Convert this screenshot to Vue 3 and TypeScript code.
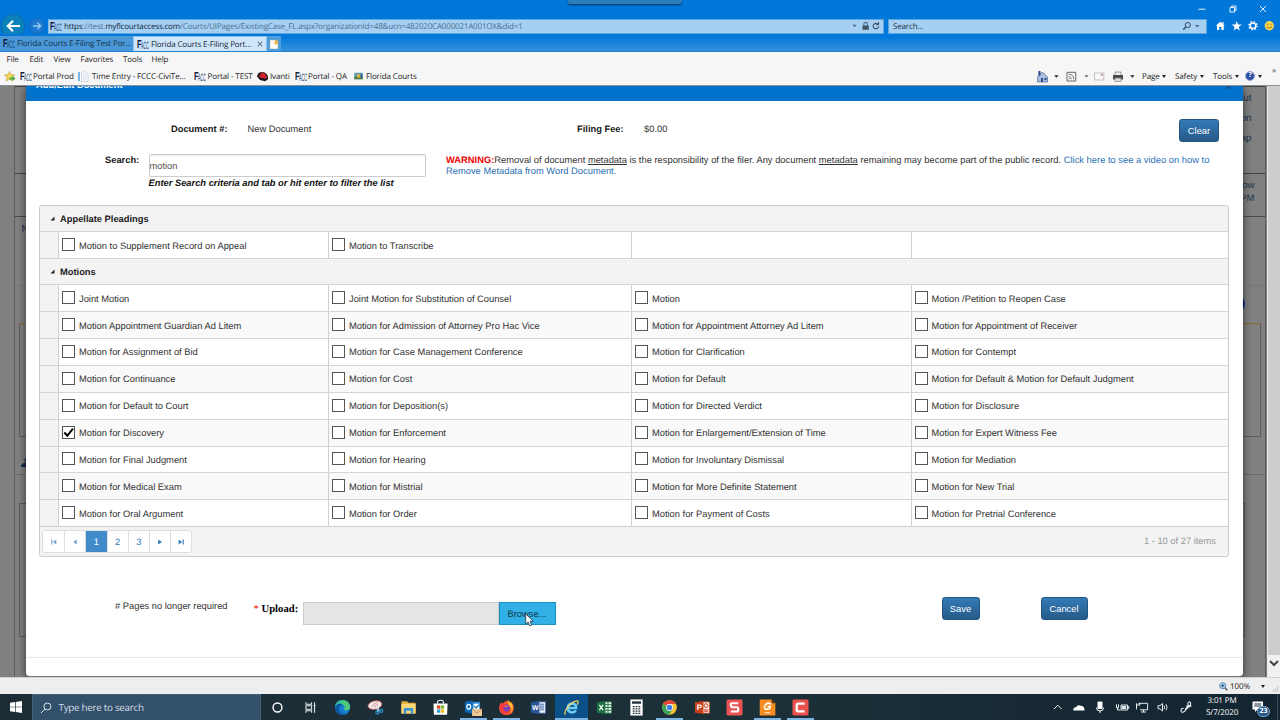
<script setup lang="ts">
interface Cell {
  label: string
  checked?: boolean
}
interface Group {
  title: string
  rows: Cell[][]
}

const toCells = (labels: string[]): Cell[] =>
  labels.map((label) => ({ label, checked: label === 'Motion for Discovery' }))

const groups: Group[] = [
  {
    title: 'Appellate Pleadings',
    rows: [toCells(['Motion to Supplement Record on Appeal', 'Motion to Transcribe', '', ''])],
  },
  {
    title: 'Motions',
    rows: [
      ['Joint Motion', 'Joint Motion for Substitution of Counsel', 'Motion', 'Motion /Petition to Reopen Case'],
      ['Motion Appointment Guardian Ad Litem', 'Motion for Admission of Attorney Pro Hac Vice', 'Motion for Appointment Attorney Ad Litem', 'Motion for Appointment of Receiver'],
      ['Motion for Assignment of Bid', 'Motion for Case Management Conference', 'Motion for Clarification', 'Motion for Contempt'],
      ['Motion for Continuance', 'Motion for Cost', 'Motion for Default', 'Motion for Default & Motion for Default Judgment'],
      ['Motion for Default to Court', 'Motion for Deposition(s)', 'Motion for Directed Verdict', 'Motion for Disclosure'],
      ['Motion for Discovery', 'Motion for Enforcement', 'Motion for Enlargement/Extension of Time', 'Motion for Expert Witness Fee'],
      ['Motion for Final Judgment', 'Motion for Hearing', 'Motion for Involuntary Dismissal', 'Motion for Mediation'],
      ['Motion for Medical Exam', 'Motion for Mistrial', 'Motion for More Definite Statement', 'Motion for New Trial'],
      ['Motion for Oral Argument', 'Motion for Order', 'Motion for Payment of Costs', 'Motion for Pretrial Conference'],
    ].map(toCells),
  },
]

const menus = ['File', 'Edit', 'View', 'Favorites', 'Tools', 'Help']
</script>

<template>
  <div class="screen">
    <svg class="defs" width="0" height="0">
      <symbol id="facc" viewBox="0 0 12 11">
        <text x="0" y="8.6" font-size="11.5" font-weight="700" fill="#101c3c" textLength="4.6" lengthAdjust="spacingAndGlyphs">F</text>
        <text x="4" y="9.9" font-size="10.800" font-weight="400" fill="#173f70" textLength="7.9" lengthAdjust="spacingAndGlyphs">ACC</text>
      </symbol>
    </svg>

    <header class="chrome">
      <div class="dock-tab"></div>
      <div class="window-buttons">
        <svg viewBox="0 0 8 8"><path d="M.5 4.2h7" /></svg>
        <svg viewBox="0 0 8 8"><path d="M1 2.5h4.5V7H1zM2.6 2.3V1H7v4.6H5.8" /></svg>
        <svg viewBox="0 0 8 8"><path d="M1 1l6 6M7 1L1 7" /></svg>
      </div>

      <div class="address-row">
        <svg class="nav-back" viewBox="0 0 24 24">
          <circle cx="12" cy="12" r="11.6" fill="#0c82bd" stroke="#1766a6" stroke-width=".8" />
          <path d="M19 12H7M12 6.8L6.8 12l5.200 5.200" fill="none" stroke="#fff" stroke-width="2.200" />
        </svg>
        <svg class="nav-forward" viewBox="0 0 16 16">
          <circle cx="8" cy="8" r="7.400" fill="#1b79cf" stroke="#1765b1" stroke-width=".8" />
          <path d="M4 8h7.500M8.300 4.600L11.700 8l-3.400 3.400" fill="none" stroke="#9dcbf3" stroke-width="1.300" />
        </svg>
        <div class="url-box">
          <svg class="facc"><use href="#facc" /></svg>
          <span class="url"><b>https</b>://test.<b>myflcourtaccess.com</b><span class="url-path">/Courts/UIPages/ExistingCase_FL.aspx?organizationId=48&amp;ucn=482020CA000021A001OX&amp;did=1</span></span>
          <svg class="url-tools" viewBox="0 0 28 10">
            <path d="M.5 3.800h4.200L2.600 6.300z" fill="#4c6a86" />
            <path d="M10.500 4.500h6.300v4.300h-6.300z" fill="#3e5061" />
            <path d="M11.800 4.500V3.200a1.850 1.850 0 0 1 3.700 0v1.300" fill="none" stroke="#3e5061" />
            <path d="M26.600 5.300a2.700 2.700 0 1 1-1-2.300M26.500 1v2.500H24" fill="none" stroke="#3e5061" stroke-width="1.100" />
          </svg>
        </div>
        <div class="search-box">
          <span>Search...</span>
          <svg viewBox="0 0 20 10">
            <circle cx="5.800" cy="4" r="2.600" fill="none" stroke="#334a62" />
            <path d="M3.800 6L1.200 8.700" stroke="#334a62" stroke-width="1.300" />
            <path d="M13 4h4.400l-2.200 2.400z" fill="#4c6a86" />
          </svg>
        </div>
        <svg class="chrome-tools" viewBox="0 0 60 12">
          <path d="M.8 5.800L5.300 1.800l1.900 1.700V2h1.300v2.600l1.300 1.200H8.700V10H6.400V7H4.300v3H2V5.800z" fill="#fff" />
          <path d="M21.700 1l1.300 3.400 3.700.2-2.900 2.300 1 3.600-3.100-2-3.100 2 1-3.600-2.900-2.300 3.700-.2z" fill="#fff" />
          <circle cx="38" cy="5.700" r="2.800" fill="none" stroke="#fff" stroke-width="1.500" />
          <circle cx="38" cy="5.700" r="4.100" fill="none" stroke="#fff" stroke-width="1.300" stroke-dasharray="1.600 1.620" />
          <circle cx="54.300" cy="5.700" r="4.700" fill="#f8d44c" />
          <path d="M52.700 3.600v1.500M55.900 3.600v1.500M51.600 6.800q2.700 2.600 5.400 0" fill="none" stroke="#7a5a12" stroke-width=".8" />
        </svg>
      </div>

      <div class="tab-row">
        <div class="tab"><svg class="facc"><use href="#facc" /></svg><span>Florida Courts E-Filing Test Por...</span></div>
        <div class="tab tab-active">
          <svg class="facc"><use href="#facc" /></svg><span>Florida Courts E-Filing Port...</span>
          <svg class="tab-close" viewBox="0 0 6 6"><path d="M.7.7l4.600 4.600M5.300.7L.7 5.300" stroke="#6b7c8e" stroke-width="1.100" /></svg>
        </div>
        <div class="tab-new">
          <svg viewBox="0 0 10 10"><path d="M1 1h5.500L9 3.500V10H1z" fill="#fffdf6" stroke="#a59c85" stroke-width=".5" /><path d="M6.800 0l1 1.700 2 .4-1.300 1.600.2 2-1.900-.8-1.500.8.200-2z" fill="#eeb23e" /></svg>
        </div>
      </div>
    </header>

    <div class="bars">
      <nav class="menu-bar"><span v-for="m in menus" :key="m" :class="'menu-' + m.toLowerCase()">{{ m }}</span></nav>
      <div class="favorites-bar">
        <svg class="fav-star" viewBox="0 0 12 11">
          <path d="M5.500.5l1.500 3.200 3.600.3-2.700 2.400.9 3.600-3.300-1.900-3.200 1.900.9-3.600L.5 4l3.600-.3z" fill="#f6d95a" stroke="#b98f20" stroke-width=".6" />
          <path d="M5.500 6.500h3V4.800L11.500 7.500 8.500 10V8.500h-3z" fill="#49a942" />
        </svg>
        <a class="fav fav-prod"><svg class="facc"><use href="#facc" /></svg><span>Portal Prod</span></a>
        <a class="fav fav-time">
          <svg class="fav-page" viewBox="0 0 11 11"><path d="M1 1v9" stroke="#3c93cf" stroke-width="1.300" /><path d="M3.500 1h4.500l2 2v7.500H3.500z" fill="#f7fafd" stroke="#b8c3ce" stroke-width=".6" /><path d="M4.800 4h3.500M4.800 6h3.500M4.800 8h3.500" stroke="#b6cbe0" stroke-width=".6" /></svg>
          <span>Time Entry - FCCC-CiviTe...</span>
        </a>
        <a class="fav fav-test"><svg class="facc"><use href="#facc" /></svg><span>Portal - TEST</span></a>
        <a class="fav fav-ivanti">
          <svg class="fav-hat" viewBox="0 0 11 11"><path d="M0 5.500Q1 1 4 1.200 8 .3 10 3.500q1.500 2 .8 5L8 10.200 3 9z" fill="#1c1414" /><path d="M.5 5.200Q2 6.300 3 4.500 3.600 1.200 5.300 1.800q3.600.3 3.600 2.900Q11 6 9.800 7.200 6.500 8.300.5 5.200z" fill="#cf2430" /></svg>
          <span>Ivanti</span>
        </a>
        <a class="fav fav-qa"><svg class="facc"><use href="#facc" /></svg><span>Portal - QA</span></a>
        <a class="fav fav-courts">
          <svg class="fav-pic" viewBox="0 0 9 8"><path d="M.3.800h8.400v6.400H.3z" fill="#5c9fb5" /><path d="M.3 4.800l8.400-.8v3.200H.3z" fill="#507a3f" /><path d="M3 2.400h3.400v3.200H3z" fill="#e6b13d" /><path d="M6.600 1.500h1.700v4H6.600z" fill="#3566a5" /></svg>
          <span>Florida Courts</span>
        </a>
        <div class="command-bar">
          <svg class="cmd-icons" viewBox="0 0 104 13">
            <path d="M1.500 7L6.500 2l5 5v5h-10z" fill="#a9bfdd" stroke="#4d6391" stroke-width=".7" /><path d="M2.500 1h2v4l-2 1.500z" fill="#25418f" /><path d="M5 8h2v4H5zM8.500 8h2v2h-2z" fill="#2d4f8d" />
            <path d="M18.200 5.200h4.300l-2.150 2.500z" fill="#222" />
            <path d="M31 2.300h8.700v8.700H31z" fill="#fafafa" stroke="#666" /><path d="M32.700 8.900h1.100M32.700 6.500q2.600.1 2.600 2.700M32.700 4.200q5 .2 5 5" fill="none" stroke="#666" stroke-width=".9" />
            <path d="M48.400 5.200h4l-2 2.300z" fill="#666" />
            <path d="M58.500 3h9.300v7h-9.300z" fill="#fafafa" stroke="#b4b4b4" stroke-width=".8" /><path d="M64.700 4h2v1.800h-2z" fill="#c98b8b" />
            <path d="M79 2h6v4h-6z" fill="#eee" stroke="#777" stroke-width=".7" /><path d="M77 5h10v4.500H77z" fill="#4a4a4a" /><path d="M79 8h6v3.500h-6z" fill="#ddd" stroke="#777" stroke-width=".6" />
            <path d="M94.200 5.200h4.300l-2.150 2.500z" fill="#222" />
          </svg>
          <span class="cmd cmd-page">Page<i></i></span>
          <span class="cmd cmd-safety">Safety<i></i></span>
          <span class="cmd cmd-tools">Tools<i></i></span>
          <span class="cmd cmd-help"><b>?</b><i></i></span>
          <span class="more">»</span>
        </div>
      </div>
    </div>

    <main class="viewport">
      <div class="site">
        <div class="site-head"><span>out</span><span>on</span><span>ap</span></div>
        <div class="site-band"><span>low</span><span>PM</span></div>
        <div class="site-section site-first">
          <div class="site-title"><span>N</span></div>
          <div class="site-sub"><span>)</span></div>
          <div class="site-box"></div>
          <svg class="site-person" viewBox="0 0 10 12"><circle cx="6" cy="3" r="2.500" fill="#24344e" /><path d="M0 10q0-4 6-5l4 5z" fill="#14274f" /></svg>
        </div>
        <div class="site-section site-second"><div class="site-inner"></div></div>
      </div>

      <div class="scrollbar">
        <svg viewBox="0 0 12 16"><path d="M2 6l4 4 4-4" fill="none" stroke="#444" stroke-width="2" /></svg>
      </div>

      <section class="dialog">
        <div class="dialog-head"><strong>Add/Edit Document</strong><span>×</span></div>
        <div class="dialog-body">
          <div class="doc-row">
            <b class="doc-label">Document #:</b><span class="doc-value">New Document</span>
            <b class="fee-label">Filing Fee:</b><span class="fee-value">$0.00</span>
            <button class="btn btn-clear">Clear</button>
          </div>

          <div class="search-row">
            <b class="search-label">Search:</b>
            <div class="search-field">
              <div class="input">motion</div>
              <em>Enter Search criteria and tab or hit enter to filter the list</em>
            </div>
            <p class="warning">
              <b>WARNING:</b>Removal of document <u>metadata</u> is the responsibility of the filer. Any document <u>metadata</u> remaining may become part of the public record. <a>Click here to see a video on how to<br />Remove Metadata from Word Document.</a>
            </p>
          </div>

          <div class="grid">
            <template v-for="g in groups" :key="g.title">
              <div class="group-head"><svg viewBox="0 0 5 5"><path d="M4.500.5v4h-4z" fill="#222" /></svg>{{ g.title }}</div>
              <div v-for="(row, r) in g.rows" :key="r" class="grid-row" :class="{ alt: r % 2 === 1 }">
                <div class="indent"></div>
                <div v-for="(cell, c) in row" :key="c" class="cell">
                  <template v-if="cell.label">
                    <span class="check"><svg v-if="cell.checked" viewBox="0 0 11 11"><path d="M1.300 5.500L4.300 8.700 10 1.700" fill="none" stroke="#000" stroke-width="1.900" /></svg></span>
                    <span class="cell-label">{{ cell.label }}</span>
                  </template>
                </div>
              </div>
            </template>
            <div class="pager">
              <div class="pages">
                <span><svg class="dim" viewBox="0 0 6 6"><path d="M.8.6v4.800" stroke="#4a8bc6" stroke-width="1.100" /><path d="M5.400.6v4.800L1.800 3z" fill="#4a8bc6" /></svg></span>
                <span><svg class="dim" viewBox="0 0 6 6"><path d="M4.800.6v4.800L1.200 3z" fill="#4a8bc6" /></svg></span>
                <span class="current">1</span>
                <span>2</span>
                <span>3</span>
                <span><svg viewBox="0 0 6 6"><path d="M1.200.6v4.800L5 3z" fill="#337ab7" /></svg></span>
                <span><svg viewBox="0 0 6 6"><path d="M5.200.6v4.800" stroke="#337ab7" stroke-width="1.100" /><path d="M.6.6v4.800L4.200 3z" fill="#337ab7" /></svg></span>
              </div>
              <span class="pager-info">1 - 10 of 27 items</span>
            </div>
          </div>

          <div class="upload-row">
            <span class="pages-note"># Pages no longer required</span>
            <b class="upload-label"><i>*</i> Upload:</b>
            <div class="file-field"></div>
            <div class="browse">
              Browse...
              <svg class="cursor" viewBox="0 0 9 14"><path d="M.7.800v10.400l2.400-2.200 1.700 3.900 1.900-.8L5 8.300h3.300z" fill="#fff" stroke="#26323c" stroke-width=".8" /></svg>
            </div>
            <button class="btn btn-save">Save</button>
            <button class="btn btn-cancel">Cancel</button>
          </div>
        </div>
      </section>
    </main>

    <div class="status-bar">
      <svg class="zoom-icon" viewBox="0 0 9 9"><circle cx="3.700" cy="3.700" r="3" fill="#b8d9f2" stroke="#4d7ba8" stroke-width=".9" /><path d="M2.200 3.700h3M3.700 2.200v3" stroke="#1f4d86" /><path d="M6 6l2.300 2.300" stroke="#555" stroke-width="1.500" /></svg>
      <span>100%</span><i></i>
      <svg class="grip" viewBox="0 0 7 7"><path d="M5 1h1.200M3 3h1.200M5 3h1.200M1 5h1.200M3 5h1.200M5 5h1.200" stroke="#aaa" stroke-width="1.200" /></svg>
    </div>

    <footer class="taskbar">
      <div class="start"><svg viewBox="0 0 12 12"><path d="M0 1.700l5-.7v4.700H0zM5.700.9L12 0v5.700H5.700zM0 6.300h5V11l-5-.7zM5.700 6.300H12V12l-6.300-.9z" fill="#fff" /></svg></div>
      <div class="task-search">
        <svg viewBox="0 0 12 12"><circle cx="7.400" cy="4.500" r="3.500" fill="none" stroke="#dbe4ea" stroke-width="1" /><path d="M4.900 7.100L1 11" stroke="#dbe4ea" stroke-width="1" /></svg>
        <span>Type here to search</span>
      </div>
      <div class="task"><svg viewBox="0 0 18 18"><circle cx="9" cy="9" r="4.700" fill="none" stroke="#fff" stroke-width="1.500" /></svg></div>
      <div class="task"><svg viewBox="0 0 18 18"><path d="M4.200 3.500v2h6v-2M4.200 14.500v-2h6v2M4.200 7.200h6v3.600h-6zM13.300 3.500v11M12.300 6.800h2" fill="none" stroke="#e8eef0" stroke-width="1.100" /></svg></div>
      <div class="task">
        <svg viewBox="0 0 18 18">
          <circle cx="9" cy="9" r="8" fill="#1583d4" />
          <path d="M1.200 8Q2 1 9.300 1q7 .3 7.700 7 .1 4-4 4-3-.2-2-1.700 1.500-3-1.500-4.300Q4 4.500 1.200 8z" fill="#38bd9c" />
          <path d="M7 2Q15 0 17 8q0 4-4 4-3-.2-2-1.700 1.500-3-1.500-4.300z" fill="#5bd06b" opacity=".65" />
          <path d="M9.200 6Q4.800 7 5.800 12q1 4 6.500 4Q4 19 1.400 11 .5 6.500 5 5q3-.4 4.200 1z" fill="#0c58a5" />
          <path d="M9.200 7.500q-2 3 .3 5 3 2 6.300.8L14 16q-6 0-7-5 0-3 2.200-3.500z" fill="#1a79c3" />
        </svg>
      </div>
      <div class="task"><svg viewBox="0 0 18 18"><ellipse cx="8.300" cy="6.500" rx="7.500" ry="4.500" fill="#f0e9e9" stroke="#b84444" stroke-width=".8" transform="rotate(-12 8 6)" /><path d="M5 8l6-5M8 8l4-3" stroke="#c76d6d" stroke-width=".8" /><path d="M8 8.500l6 5M12.500 8l-1.500 6" stroke="#c8d3d9" stroke-width="1.200" /><circle cx="11" cy="14.500" r="1.600" fill="none" stroke="#2693d1" stroke-width="1.300" /><circle cx="15" cy="12.700" r="1.600" fill="none" stroke="#2693d1" stroke-width="1.300" /></svg></div>
      <div class="task"><svg viewBox="0 0 18 18"><path d="M1.500 2.500h6l1.500 1.500h7.500V15h-15z" fill="#e6ab34" /><path d="M1.500 5h15V15.500h-15z" fill="#fcd877" /><path d="M4 15.500V9.500h10v6h-2.500v-3h-5v3z" fill="#3c94d4" /></svg></div>
      <div class="task"><svg viewBox="0 0 18 18"><path d="M6 5V3.300Q6 1.300 9 1.300t3 2V5" fill="none" stroke="#fff" stroke-width="1.100" /><path d="M1.500 4.700h15L16 16.800H2z" fill="#fff" /><path d="M5.200 6.800h3.500v3.500H5.200z" fill="#e74b26" /><path d="M9.300 6.800h3.500v3.500H9.300z" fill="#76b82a" /><path d="M5.200 11h3.500v3.500H5.200z" fill="#2a9ddd" /><path d="M9.300 11h3.500v3.500H9.300z" fill="#f6b61c" /></svg></div>
      <div class="task open stacked"><svg viewBox="0 0 18 18"><path d="M7 3h9v10H7z" fill="#2a8ad4" /><path d="M9 5h6v6H9z" fill="#fff" /><path d="M9.800 7.500l2 2L15 6" fill="none" stroke="#1b76bd" stroke-width="1.400" /><path d="M0 3l8-1.500v14L0 14z" fill="#0a68b8" /><ellipse cx="4" cy="8.300" rx="2" ry="2.500" fill="none" stroke="#fff" stroke-width="1.300" /><path d="M7.500 10.500H18V18H7.500z" fill="#f0cb99" /><path d="M7.500 10.500l5.200 4.500L18 10.500" fill="none" stroke="#ae7f47" stroke-width=".8" /></svg></div>
      <div class="task open">
        <svg viewBox="0 0 18 18">
          <path d="M9 1.500Q11 4 13 4.500l1-1.500q3 3 2.800 7-.5 7-7.800 7T1.200 10Q1 6 3.500 3.500L4.500 5q2.500-2 4.500-3.500z" fill="#f5522e" />
          <path d="M10 1q4 2 5.500 6 1 6-3 8.500Q16 10 12.500 8q-2-2-2.500-7z" fill="#ffbd2e" />
          <circle cx="8.700" cy="9.700" r="3.900" fill="#7a43b8" /><path d="M2 6q3-2 6.500.5Q6 8 5.500 10q1 4 6 3.500Q8 17 4 14 .8 10 2 6z" fill="#f9393f" /><path d="M6 8.500q3-2 5 0z" fill="#ff9838" />
        </svg>
      </div>
      <div class="task"><svg viewBox="0 0 18 18"><path d="M9 3h7.500v12H9z" fill="#f2f6fb" stroke="#3261aa" stroke-width=".8" /><path d="M10.500 5.500h4.500M10.500 7.500h4.500M10.500 9.500h4.500M10.500 11.500h4.500" stroke="#3261aa" /><path d="M1 3.500L10 2v14L1 14.500z" fill="#2b579a" /><text x="2" y="11.600" font-size="7.500" font-weight="700" fill="#fff" textLength="7" lengthAdjust="spacingAndGlyphs">W</text></svg></div>
      <div class="task open active"><svg viewBox="0 0 18 18"><path d="M4.500 9.500h9.300Q14 4.800 9.700 4.700 5 5 4.900 10q.3 4.200 4.800 4.200 2.600 0 4-2.200" fill="none" stroke="#67cdf5" stroke-width="2.700" /><path d="M2.500 16.500Q.5 14 5 8.500 12 1 15.500 2q1.300 1-.5 4" fill="none" stroke="#ffd45a" stroke-width="1.300" /></svg></div>
      <div class="task"><svg viewBox="0 0 18 18"><path d="M9 3h7.500v12H9z" fill="#e9f4ec" stroke="#217346" stroke-width=".8" /><path d="M12.700 3v12M9 6h7.500M9 9h7.500M9 12h7.500" stroke="#217346" /><path d="M1 3.500L10 2v14L1 14.500z" fill="#1e7144" /><path d="M3.500 6.200l4 5.600M7.500 6.200l-4 5.600" stroke="#fff" stroke-width="1.300" /></svg></div>
      <div class="task"><svg viewBox="0 0 18 18"><path d="M2.500.5h13v17h-13z" fill="#fff" /><path d="M4.200 2.500h9.600v2.500H4.200z" fill="#1d2d38" /><path d="M5 8h2M8 8h2M11 8h2M5 10.500h2M8 10.500h2M11 10.500h2M5 12.800h2M8 12.800h2M11 12.800h2M5 15.200h2M8 15.200h2M11 15.200h2" stroke="#1d2d38" stroke-width="1.300" /></svg></div>
      <div class="task open"><svg viewBox="0 0 18 18"><circle cx="9" cy="9" r="7.800" fill="#f2c32f" /><path d="M9 9L2.200 5.200A7.800 7.800 0 0 1 15.800 5.200H9z" fill="#e2483c" /><path d="M9 9L2.200 5.200A7.800 7.800 0 0 0 8.600 16.800L12 11z" fill="#3ba655" /><circle cx="9" cy="9" r="3.700" fill="#fff" /><circle cx="9" cy="9" r="2.900" fill="#447fe8" /></svg></div>
      <div class="task"><svg viewBox="0 0 18 18"><path d="M9 3h7.500v12H9z" fill="#fbeae5" stroke="#c43e1c" stroke-width=".8" /><circle cx="12.700" cy="7" r="2" fill="none" stroke="#c43e1c" /><path d="M10.500 11.500h4.700M10.500 13h4.700" stroke="#c43e1c" /><path d="M1 3.500L10 2v14L1 14.500z" fill="#c9401f" /><text x="2.800" y="11.800" font-size="8.500" font-weight="700" fill="#fff">P</text></svg></div>
      <div class="task"><svg viewBox="0 0 18 18"><rect x=".5" y=".5" width="17" height="17" rx="1.500" fill="#e95452" /><path d="M13 4.500H6.500Q5 4.500 5 6.300T6.500 8.800h5q1.500 0 1.500 2.200t-1.500 2.300H5" fill="none" stroke="#fff" stroke-width="2.200" /></svg></div>
      <div class="task open"><svg viewBox="0 0 18 18"><path d="M.8.5h12.500l4 4v13H.8z" fill="#f58d20" /><path d="M13.300.5l4 4h-4z" fill="#5d3410" /><path d="M13 5.500Q9 3 6.500 6.500T8.500 11q3.500-.2 3.500-3H9" fill="none" stroke="#fff" stroke-width="1.700" /><path d="M6 14.500h6" stroke="#fbd4a8" stroke-width="1.500" /></svg></div>
      <div class="task open"><svg viewBox="0 0 18 18"><rect x=".5" y=".5" width="17" height="17" rx="1.500" fill="#ea5250" /><path d="M13.300 4.800H6.500Q5 4.800 5 6.500v5Q5 13.200 6.500 13.200h6.800" fill="none" stroke="#fff" stroke-width="2.400" /></svg></div>

      <svg class="tray" viewBox="0 0 146 26">
        <g fill="none" stroke="#e6ecef" stroke-width="1">
          <path d="M3 15l3.800-3.800L10.600 15" />
          <path d="M65.500 10.300v3.500h2v-3.500M66.500 13.800v2.200h3M70 11h6.500v5H70zM76.500 12.500h1.300v2h-1.300" />
          <path d="M85.500 9.300v6M87.300 9.300h9.300v6.500H89M92.500 16v2M90 18h5M85.500 11h3.500v-2" />
          <path d="M107 11.700h2l2.500-2.200v7.500l-2.500-2.200h-2zM113 11.500q1.300 1.700 0 3.500M115 10.300q2.200 2.900 0 5.900" />
          <path d="M132.500 14.500q-2.500-.5-2.500 2t2.500 1.500 2-3l3-3.500q-1.500-2.800.5-3.500t1.500 3l-4.500 4.500M135 12h5.500M135.500 14l4.500-2" stroke-width="1.100" />
        </g>
        <path d="M22.500 16.500q-1-3 2.500-3.200 1.500-3.300 5-1.500 3.500.3 3.500 4.700z" fill="#fff" />
        <path d="M70.500 12h4.700v3h-4.700z" fill="#dfe6e9" />
        <rect x="46.500" y="7.500" width="5" height="7.500" rx="1" fill="#fff" /><path d="M45.500 13.500q0 3.500 3.500 3.500t3.500-3.500M49 17v2" stroke="#fff" fill="none" />
      </svg>
      <div class="clock"><span>3:01 PM</span><span>5/7/2020</span></div>
      <div class="notify">
        <svg viewBox="0 0 12 12"><path d="M.5.5h10.500v8H5.500L3 11V8.500H.5z" fill="#fff" /><path d="M2.300 3h7M2.300 5h7" stroke="#1a2c38" /></svg>
        <b>23</b>
      </div>
    </footer>
  </div>
</template>

<style>
html, body { background: #f5f5f6; overflow: hidden; }
</style>

<style scoped>
* { box-sizing: border-box; }
.screen { width: 1280px; height: 720px; display: flex; flex-direction: column; overflow: hidden; font-family: "Open Sans", "Noto Sans", sans-serif; font-size: 8px; color: #222; text-rendering: geometricPrecision; white-space: nowrap; }
.defs { position: absolute; }
svg { flex: none; display: block; }
.facc { width: 12px; height: 11px; font-family: "Liberation Sans", sans-serif; letter-spacing: 0; }

/* Browser frame */
.chrome { height: 52px; flex: none; background: #0177da; position: relative; display: flex; flex-direction: column; }
.dock-tab { position: absolute; left: 568px; top: 0; width: 114px; height: 4px; background: #2d7dbb; border-radius: 0 0 2px 2px; box-shadow: 0 1px 2px #06335e; }
.window-buttons { height: 18px; display: flex; justify-content: flex-end; align-items: center; gap: 22.500px; padding-right: 13px; }
.window-buttons svg { width: 8px; height: 8px; fill: none; stroke: #e4f2ff; stroke-width: 1; }
.address-row { height: 16px; display: flex; align-items: center; }
.nav-back { width: 24px; height: 24px; margin-left: 1px; }
.nav-forward { width: 16px; height: 16px; margin-left: 4px; }
.url-box { margin-left: 3px; width: 836px; height: 15px; background: #a5d0f4; border: 1px solid #5fa6e0; border-left-color: #86b9e3; display: flex; align-items: center; padding-left: 1px; }
.url { margin-left: 2px; color: #4e6f8d; font-size: 8px; letter-spacing: -.175px; }
.url b { font-weight: 400; color: #0e2439; }
.url-tools { width: 28px; height: 10px; margin-left: auto; margin-right: 3px; }
.search-box { margin-left: 4px; width: 319px; height: 15px; background: #a5d0f4; border: 1px solid #5fa6e0; display: flex; align-items: center; justify-content: space-between; padding: 0 4px; color: #1d2f40; letter-spacing: -.15px; }
.search-box svg { width: 20px; height: 10px; }
.chrome-tools { width: 60px; height: 12px; margin-left: 8px; }
.tab-row { height: 18px; padding-top: 2px; display: flex; background: linear-gradient(#0177da 15%, #3490dc); border-bottom: 1px solid #2180cf; }
.tab { width: 133px; display: flex; align-items: center; padding-left: 3px; background: #4a98d7; color: #13314c; font-size: 8px; letter-spacing: -.16px; }
.tab span { margin-left: 2px; }
.tab-active { width: 134px; background: #cfe6fa; border: 1px solid #8cc2ee; border-bottom: 0; color: #1a2733; }
.tab-close { width: 6px; height: 6px; margin-left: auto; margin-right: 3px; }
.tab-new { width: 14px; background: #4d9ede; display: flex; align-items: center; justify-content: center; }
.tab-new svg { width: 10px; height: 10px; }

.bars { height: 34px; flex: none; background: #f6f6f7; border-bottom: 1px solid #8a9199; letter-spacing: -.12px; }
.menu-bar { height: 15px; display: flex; align-items: center; font-size: 8px; color: #1d1d1d; padding-left: 6.500px; }
.menu-file { width: 23px; }
.menu-edit { width: 24px; }
.menu-view { width: 27px; }
.menu-favorites { width: 42.500px; }
.menu-tools { width: 28.500px; }
.favorites-bar { height: 18px; display: flex; align-items: center; font-size: 8px; }
.fav-star { width: 12px; height: 11px; margin-left: 3.500px; }
.fav { display: flex; align-items: center; }
.fav-prod { margin-left: 4px; width: 58.500px; }
.fav-prod span, .fav-test span, .fav-qa span { margin-left: 1.500px; }
.fav-time { width: 116px; }
.fav-page, .fav-hat { width: 11px; height: 11px; }
.fav-time span { margin-left: 3px; }
.fav-test { width: 63px; }
.fav-ivanti { width: 37.500px; }
.fav-ivanti span { margin-left: 2px; }
.fav-qa { width: 59.500px; }
.fav-pic { width: 9px; height: 8px; }
.fav-courts span { margin-left: 3px; }
.command-bar { margin-left: auto; display: flex; align-items: center; }
.cmd-icons { width: 104px; height: 13px; }
.cmd { display: flex; align-items: center; }
.cmd i, .status-bar i { border: 2.200px solid transparent; border-top: 3px solid #222; border-bottom: 0; margin-left: 2.500px; }
.cmd-page { width: 33px; margin-left: 2px; }
.cmd-safety { width: 38px; }
.cmd-tools { width: 32px; }
.cmd-help { width: 27px; }
.cmd-help b { width: 10px; height: 10px; border-radius: 50%; background: #2f4fa5; border: 1px solid #98a9cb; color: #fff; font-size: 7px; line-height: 8px; text-align: center; }
.more { width: 8px; margin-top: -12px; color: #444; }

/* Page area */
.viewport { height: 591px; flex: none; position: relative; display: flex; background: #808080; overflow: hidden; font-family: "Liberation Sans", Arial, sans-serif; font-size: 9.333px; }
.site { width: 1253.500px; margin-left: 13.500px; display: flex; flex-direction: column; border: solid #5c5c5c; border-width: 0 1px; color: #20344e; }
.site-head { height: 88px; padding: 2px 13.500px 0 0; display: flex; flex-direction: column; align-items: flex-end; border-bottom: 1px solid #444; border-top: 1px solid #444; font-size: 10px; line-height: 20px; }
.site-band { height: 43px; padding: 5px 10.500px 0 0; display: flex; flex-direction: column; align-items: flex-end; border-bottom: 1px solid #4a4a4a; line-height: 13.300px; font-size: 9.600px; }
.site-first { height: 258px; border-bottom: 1px solid #6b6b6b; }
.site-title { height: 69px; padding: 7px 0 0 7px; border-bottom: 1px solid #777; color: #1b2450; font-size: 10px; }
.site-sub { height: 37px; text-align: right; padding: 9px 20px 0 0; color: #000080; font-weight: 700; font-size: 13px; }
.site-box { height: 114px; margin: 0 4px; border: 1px solid #5e5e5e; border-top-color: #8a6a33; }
.site-person { width: 10px; height: 12px; margin: 20px 0 0 6px; }
.site-second { flex: 1; padding-top: 28px; }
.site-inner { height: 134px; margin: 0 20px 0 4px; border: 1px solid #5e5e5e; }
.scrollbar { margin-left: 1px; flex: 1; background: #cdcdcd; border-left: 1px solid #e8e8e8; display: flex; flex-direction: column; justify-content: flex-end; padding-bottom: 6px; }
.scrollbar svg { width: 12px; height: 16px; background: #f1f1f1; box-shadow: 0 6px #f1f1f1; }

.dialog { position: absolute; left: 26px; top: 0; width: 1217px; height: 591px; background: #fff; border-radius: 0 0 4px 4px; border-bottom: 1px solid #777; box-shadow: 0 2px 9px rgba(0, 0, 0, .6); color: #333; }
.dialog-head { height: 15px; background: #0072cc; color: #fff; display: flex; justify-content: space-between; align-items: flex-start; padding: 0 10px; overflow: hidden; font-size: 9.333px; line-height: 12px; }
.dialog-head strong { margin-top: -7px; }
.dialog-head span { margin-top: -6px; color: #174f83; font-size: 14px; }
.dialog-body { height: 557px; border-bottom: 1px solid #e9e9e9; display: flex; flex-direction: column; }
.doc-row { height: 53px; padding-top: 18px; display: flex; align-items: flex-start; line-height: 20px; }
.doc-row b, .search-label { color: #1a1a1a; }
.doc-label { margin-left: 145px; width: 76.500px; }
.doc-value { width: 329.500px; }
.fee-label { width: 67px; }
.fee-value { width: 535px; }
.btn { height: 23px; border: 1px solid #245580; border-radius: 2.700px; background: linear-gradient(#337ab7, #265a88); color: #fff; font: 9.333px "Liberation Sans", Arial, sans-serif; padding: 0; text-align: center; }
.btn-clear { width: 40px; }
.search-row { height: 50px; display: flex; align-items: flex-start; }
.search-label { margin-left: 79px; width: 43.500px; line-height: 12px; }
.search-field { width: 297.500px; }
.input { width: 277.500px; height: 23px; border: 1px solid #ccc; border-radius: 2px; box-shadow: inset 0 1px 1px rgba(0, 0, 0, .08); line-height: 22px; color: #555; }
.search-field em { display: block; font-weight: 700; color: #111; line-height: 12px; }
.warning { margin: 1px 0 0; line-height: 10.667px; letter-spacing: .012px; }
.warning b { color: #e00; }
.warning a { color: #2a6fb3; }

/* Document type grid */
.grid { width: 1190px; margin-left: 13px; border: 1px solid #ccc; border-radius: 2.700px; margin-top: 1px; height: 352px; overflow: hidden; background: #f3f3f3; display: flex; flex-direction: column; }
.group-head { height: 25.300px; flex: none; display: flex; align-items: center; padding-left: 10px; font-weight: 700; color: #222; }
.group-head svg { width: 5px; height: 5px; margin-right: 5px; }
.grid-row { height: 26.860px; flex: none; display: grid; grid-template-columns: 18px 270px 303px 279.500px 1fr; background: #fff; border-top: 1px solid #d5d5d5; }
.grid-row.alt { background: #f9f9f9; }
.grid-row + .group-head { height: 26.200px; border-top: 1px solid #d5d5d5; }
.indent { background: #f3f3f3; }
.cell { border-left: 1px solid #d0d0d0; display: flex; align-items: center; padding-left: 3px; }
.check { width: 13px; height: 13px; border: 1px solid #555; background: #fff; margin-top: -1px; }
.check svg { width: 11px; height: 11px; }
.cell-label { margin: 1px 0 0 4px; }
.pager { flex: 1; border-top: 1px solid #ccc; display: flex; align-items: flex-start; justify-content: space-between; padding: 3px 12px 0 2px; }
.pages { display: flex; height: 23px; border: 1px solid #ddd; border-radius: 3px; overflow: hidden; background: #fff; }
.pages span { width: 21.200px; display: flex; align-items: center; justify-content: center; border-left: 1px solid #ddd; color: #337ab7; }
.pages span:first-child { border-left: 0; }
.pages .current { background: #428bca; color: #fff; }
.pages svg { width: 6px; height: 6px; }
.pages .dim { opacity: .75; }
.pager-info { color: #999; line-height: 22px; }

.upload-row { display: flex; align-items: flex-start; margin-top: 40px; line-height: 12px; }
.pages-note { margin: 3px 0 0 89px; width: 138.500px; }
.upload-label { font-family: "Liberation Serif", "Times New Roman", serif; font-size: 10.667px; color: #000; width: 49px; margin-top: 7px; }
.upload-label i { color: #e00; font-style: normal; font-weight: 400; }
.file-field { width: 196px; height: 23px; margin-top: 5px; background: #e5e5e5; border: 1px solid #ccc; }
.browse { position: relative; width: 57px; height: 23px; margin-top: 5px; background: #30b0e4; border: 1px solid #1b8fc4; line-height: 22px; padding-left: 8px; color: #12394b; }
.cursor { position: absolute; left: 25px; top: 10px; width: 9px; height: 14px; }
.btn-save { width: 38px; margin-left: 386px; }
.btn-cancel { width: 47px; margin-left: 61px; }

.status-bar { height: 17px; flex: none; background: #eee; border-top: 1px solid #d0d0d0; display: flex; align-items: center; justify-content: flex-end; font-size: 8px; letter-spacing: -.1px; }
.zoom-icon { width: 9px; height: 9px; margin-right: 2px; }
.status-bar i { margin-left: 11px; }
.grip { width: 7px; height: 7px; margin: 7px 1px 0 7px; }

/* Taskbar */
.taskbar { height: 26px; flex: none; background: linear-gradient(90deg, #1b2c35, #1c3038 60%, #132531); display: flex; align-items: stretch; color: #fff; }
.start { width: 32px; display: flex; align-items: center; justify-content: center; }
.start svg { width: 12px; height: 12px; }
.task-search { width: 229px; background: #33506a; border: solid #43627a; border-width: 1px 1px 0; display: flex; align-items: center; padding-left: 7px; font-size: 9.800px; letter-spacing: -.26px; color: #d5dee6; }
.task-search svg { width: 12px; height: 12px; margin-right: 6.500px; }
.task-search span { margin-top: -1px; }
.task { width: 32.700px; display: flex; align-items: center; justify-content: center; position: relative; font-family: "Liberation Sans", sans-serif; }
.task svg { width: 17px; height: 17px; }
.task.open::after { content: ""; position: absolute; left: 3px; right: 3px; bottom: 0; height: 2px; background: #7eb4e2; }
.task.active { background: #0b5089; }
.task.active::after { left: 0; right: 0; }
.tray { width: 146px; height: 26px; margin-left: auto; }
.clock { width: 48px; display: flex; flex-direction: column; align-items: center; justify-content: center; font-size: 8px; line-height: 12px; letter-spacing: -.15px; margin-left: 1px; }
.notify { width: 27px; position: relative; margin-left: 5px; border-right: 1px solid #3b4d59; margin-right: 2px; }
.notify svg { width: 12px; height: 12px; margin: 7px 0 0 1px; }
.notify b { position: absolute; left: 6px; top: 12px; width: 13px; height: 11px; border-radius: 6px; background: #24598a; border: 1px solid #7fa6c8; font-size: 7px; line-height: 9px; text-align: center; }
</style>
